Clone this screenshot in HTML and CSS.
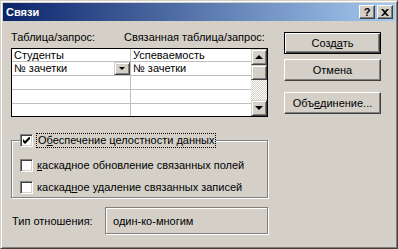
FILE: index.html
```html
<!DOCTYPE html>
<html>
<head>
  <meta charset="UTF-8">
  <title>Связи</title>
  <link rel="stylesheet" href="styles.css">
</head>
<body>
  <div class="window">
    <div class="titlebar">
      <span class="title">Связи</span>
      <div class="title-buttons">
        <span class="tbtn help">?</span>
        <span class="tbtn close">
          <svg width="8" height="7" viewBox="0 0 8 7"><path d="M0 0h2l2 2 2-2h2L5 3.5 8 7H6L4 5 2 7H0l3-3.5z" fill="#000"/></svg>
        </span>
      </div>
    </div>

    <div class="content">
      <div class="main">
        <div class="labels">
          <span class="label-left">Таблица/запрос:</span>
          <span>Связанная таблица/запрос:</span>
        </div>

        <div class="grid">
          <div class="cells">
            <div class="row row-head">
              <div class="cell c1">Студенты</div>
              <div class="cell c2">Успеваемость</div>
            </div>
            <div class="row">
              <div class="cell c1 has-drop">№ зачетки<span class="drop"><i class="arrow-down small"></i></span></div>
              <div class="cell c2">№ зачетки</div>
            </div>
            <div class="row">
              <div class="cell c1"></div>
              <div class="cell c2"></div>
            </div>
            <div class="row">
              <div class="cell c1"></div>
              <div class="cell c2"></div>
            </div>
            <div class="row row-last">
              <div class="cell c1"></div>
              <div class="cell c2"></div>
            </div>
          </div>
          <div class="scrollbar">
            <span class="sbtn"><i class="arrow-up"></i></span>
            <span class="sthumb"></span>
            <span class="strack"></span>
            <span class="sbtn"><i class="arrow-down"></i></span>
          </div>
        </div>

        <fieldset class="group">
          <legend class="check-row">
            <span class="checkbox checked">
              <svg width="7" height="7" viewBox="0 0 7 7"><path d="M0 2v3l2 2 5-5V-1L2 4z" fill="#000"/></svg>
            </span>
            <span class="focus">О<u>б</u>еспечение целостности данных</span>
          </legend>
          <div class="check-row">
            <span class="checkbox"></span>
            <span><u>к</u>аскадное обновление связанных полей</span>
          </div>
          <div class="check-row">
            <span class="checkbox"></span>
            <span>каскад<u>н</u>ое удаление связанных записей</span>
          </div>
        </fieldset>

        <div class="relation">
          <span class="relation-label">Тип отношения:</span>
          <div class="relation-box">один-ко-многим</div>
        </div>
      </div>

      <div class="actions">
        <button class="btn default">Созд<u>а</u>ть</button>
        <button class="btn">Отмена</button>
        <button class="btn join">Объ<u>е</u>динение...</button>
      </div>
    </div>
  </div>
</body>
</html>
```

FILE: styles.css
```css
* {
  box-sizing: border-box;
}
body {
  margin: 0;
  font-family: "Liberation Sans", Arial, sans-serif;
  font-size: 11px;
  color: #000;
  background: #d4d0c8;
}
.window {
  width: 398px;
  height: 249px;
  padding: 2px;
  background: #d4d0c8;
  border: 1px solid;
  border-color: #d4d0c8 #404040 #404040 #d4d0c8;
  box-shadow: inset 1px 1px 0 #fff, inset -1px -1px 0 #808080;
}

/* заголовок окна */
.titlebar {
  height: 18px;
  display: flex;
  align-items: center;
  justify-content: space-between;
  padding: 0 2px 0 3px;
  background: linear-gradient(to right, #0a246a, #a6caf0);
}
.title {
  color: #fff;
  font-weight: bold;
  font-size: 11px;
}
.title-buttons {
  display: flex;
  gap: 2px;
}
.tbtn {
  width: 16px;
  height: 14px;
  display: flex;
  align-items: center;
  justify-content: center;
  background: #d4d0c8;
  border: 1px solid;
  border-color: #fff #404040 #404040 #fff;
  box-shadow: inset -1px -1px 0 #808080;
  font-weight: bold;
  font-size: 11px;
  line-height: 1;
}

.content {
  display: flex;
  gap: 16px;
  padding: 10px 0 0 8px;
}
.main {
  width: 257px;
}
.labels {
  display: flex;
  line-height: 13px;
  margin-bottom: 4px;
}
.label-left {
  width: 113px;
}

/* таблица полей */
.grid {
  display: flex;
  height: 69px;
  border: 1px solid #000;
}
.cells {
  flex: 1;
  background: #fff;
}
.row {
  display: flex;
  height: 14px;
  border-bottom: 1px solid #c0c0c0;
}
.row-head {
  height: 13px;
}
.row-last {
  height: 12px;
  border-bottom: none;
}
.cell {
  line-height: 12px;
  padding-left: 2px;
}
.c1 {
  width: 119px;
  border-right: 1px solid #c0c0c0;
}
.c2 {
  flex: 1;
}
.has-drop {
  display: flex;
  justify-content: space-between;
  padding-right: 0;
}
.drop {
  width: 16px;
  height: 13px;
  display: flex;
  align-items: center;
  justify-content: center;
  background: #d4d0c8;
  border: 1px solid;
  border-color: #d4d0c8 #404040 #404040 #d4d0c8;
  box-shadow: inset 1px 1px 0 #fff, inset -1px -1px 0 #808080;
}
.scrollbar {
  width: 16px;
  display: flex;
  flex-direction: column;
}
.sbtn,
.sthumb {
  height: 16px;
  display: flex;
  align-items: center;
  justify-content: center;
  background: #d4d0c8;
  border: 1px solid;
  border-color: #d4d0c8 #404040 #404040 #d4d0c8;
  box-shadow: inset 1px 1px 0 #fff, inset -1px -1px 0 #808080;
}
.sthumb {
  height: 15px;
}
.strack {
  flex: 1;
  background: repeating-conic-gradient(#fff 0 25%, #d4d0c8 0 50%) 0 0 / 2px 2px;
}
.arrow-up,
.arrow-down {
  width: 0;
  height: 0;
  border-left: 4px solid transparent;
  border-right: 4px solid transparent;
}
.arrow-up {
  border-bottom: 4px solid #000;
}
.arrow-down {
  border-top: 4px solid #000;
}
.arrow-down.small {
  border-left-width: 3px;
  border-right-width: 3px;
  border-top-width: 3px;
}

/* группа флажков */
.group {
  margin: 17px 0 0;
  padding: 3px 0 7px 8px;
  height: 64px;
  border: 1px solid #808080;
  box-shadow: 1px 1px 0 #fff, inset 1px 1px 0 #fff;
}
.group legend {
  padding: 0 1px 0 0;
  background: #d4d0c8;
}
.check-row {
  display: flex;
  align-items: center;
  gap: 4px;
  line-height: 13px;
  margin-bottom: 9px;
}
.check-row:last-child {
  margin-bottom: 0;
}
.checkbox {
  width: 13px;
  height: 13px;
  display: flex;
  align-items: center;
  justify-content: center;
  background: #fff;
  border: 1px solid;
  border-color: #808080 #fff #fff #808080;
  box-shadow: inset 1px 1px 0 #404040, inset -1px -1px 0 #d4d0c8;
}
.focus {
  outline: 1px dotted #000;
  padding: 0 1px;
}

.relation {
  display: flex;
  align-items: center;
  margin-top: 9px;
}
.relation-label {
  width: 94px;
  padding-left: 1px;
}
.relation-box {
  flex: 1;
  height: 27px;
  display: flex;
  align-items: center;
  padding-left: 7px;
  border: 1px solid #808080;
  box-shadow: 1px 1px 0 #fff, inset 1px 1px 0 #fff;
}

/* кнопки */
.actions {
  width: 97px;
  display: flex;
  flex-direction: column;
  padding-top: 1px;
}
.btn {
  height: 22px;
  margin-bottom: 5px;
  font: inherit;
  color: #000;
  background: #d4d0c8;
  border: 1px solid;
  border-color: #fff #404040 #404040 #fff;
  box-shadow: inset -1px -1px 0 #808080;
  padding: 0;
}
.btn.default {
  border-color: #000;
  box-shadow: inset 1px 1px 0 #fff, inset -1px -1px 0 #404040, inset -2px -2px 0 #808080;
}
.btn.join {
  margin-top: 6px;
}
```
